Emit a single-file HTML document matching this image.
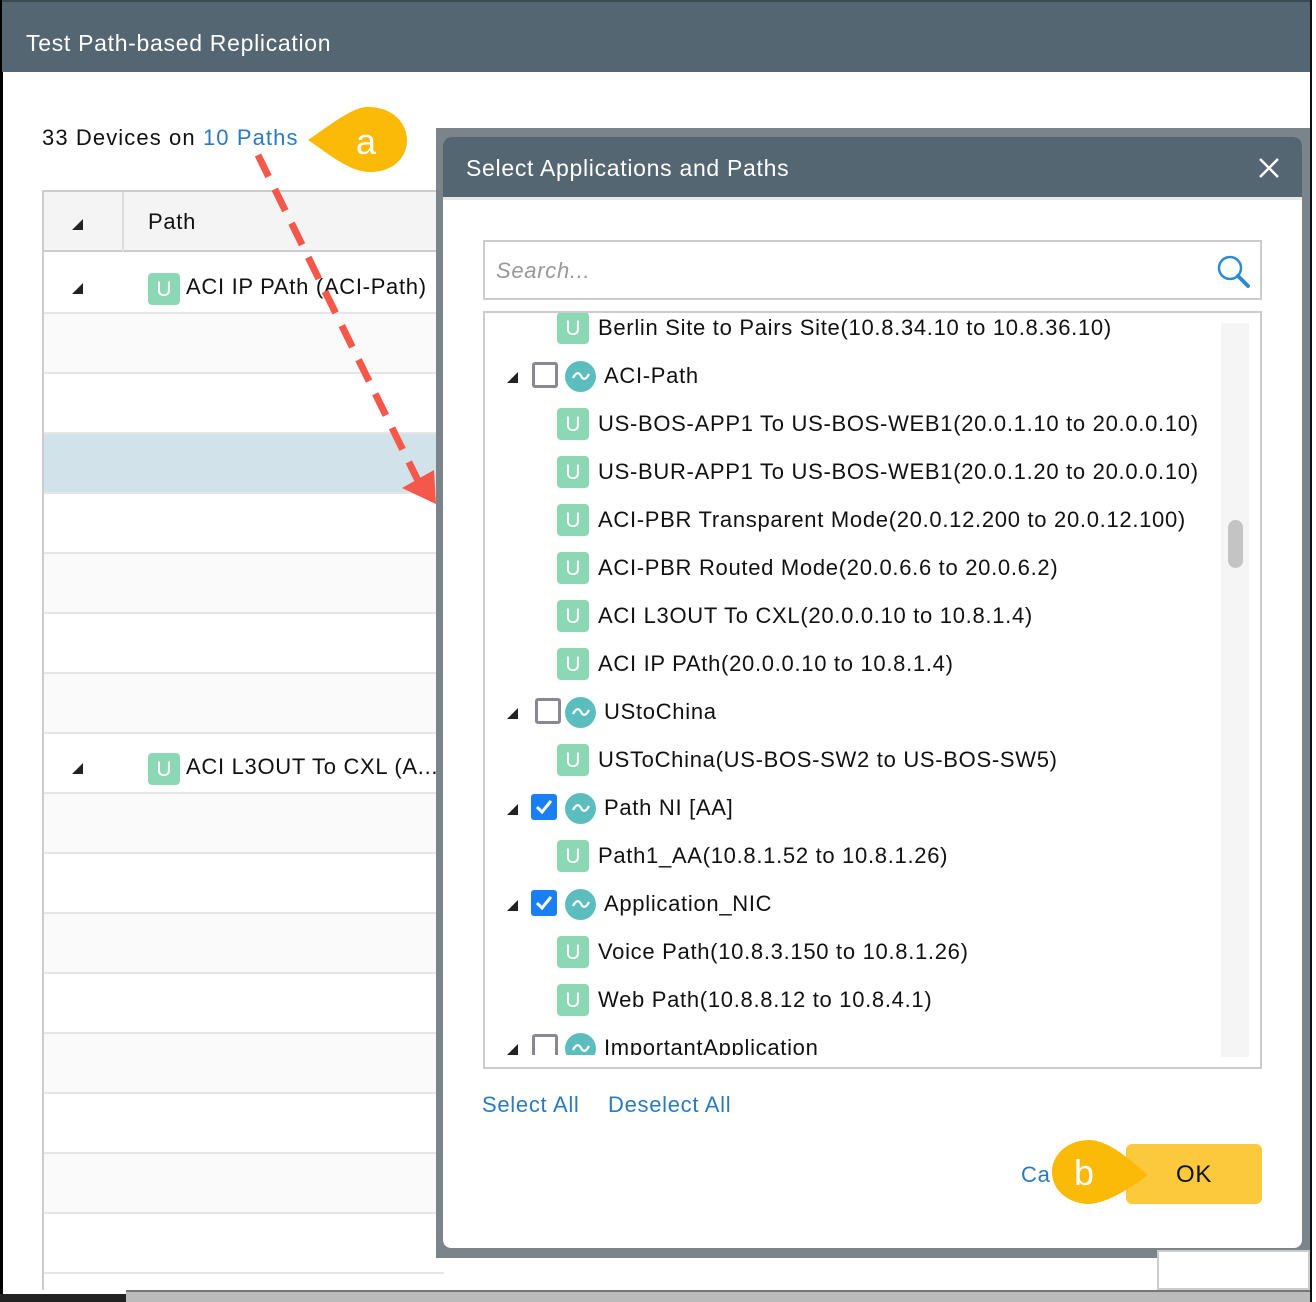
<!DOCTYPE html>
<html><head><meta charset="utf-8"><style>
*{margin:0;padding:0;box-sizing:border-box}
body{width:1316px;height:1302px;position:relative;overflow:hidden;background:#fff;font-family:"Liberation Sans","DejaVu Sans",sans-serif;color:#111}
.a{position:absolute}
.hdr{left:2px;top:0;width:1310px;height:72px;background:#546672;color:#fff;font-size:23px;padding:28px 0 0 24px;border-top:2px solid #3c4a54;letter-spacing:0.7px}
.row{position:absolute;left:44px;width:400px;height:60px;border-bottom:2px solid #e6e6e6}
.tri{position:absolute;width:0;height:0;border-left:11px solid transparent;border-bottom:11px solid #222}
.u{position:absolute;width:32px;height:32px;background:#8dd8b4;border-radius:4px;color:#fff;font-size:21px;text-align:center;line-height:34px}
.t{position:absolute;font-size:22px;white-space:nowrap;line-height:26px;letter-spacing:0.7px}
.cb{position:absolute;width:26px;height:26px;border:3px solid #8a8794;border-radius:3px;background:#fff}
.cb.on{background:#1a7ff0;border-color:#1a7ff0}
.ci{position:absolute;width:31px;height:31px;border-radius:50%;background:#5cbdbf}
</style></head><body>
<div class="a" style="left:0;top:0;width:3px;height:1302px;background:#000"></div>
<div class="a hdr">Test Path-based Replication</div>
<div class="a" style="left:1310px;top:0;width:6px;height:1302px;background:#fff;border-left:2px solid #111"></div>
<div class="t" style="left:42px;top:125px;letter-spacing:1.1px">33 Devices on <span style="color:#2a7ac0">10 Paths</span></div>
<!-- table -->
<div class="a" style="left:42px;top:190px;width:400px;height:1100px;border-left:2px solid #ccc;border-top:2px solid #ccc"></div>
<div class="a" style="left:44px;top:192px;width:400px;height:60px;background:#f4f4f4;border-bottom:2px solid #ccc"></div>
<div class="a" style="left:122px;top:192px;width:2px;height:60px;background:#ddd"></div>
<div class="tri" style="left:72px;top:219px"></div>
<div class="t" style="left:148px;top:209px">Path</div>
<div class="row" style="top:254px"></div>
<div class="row" style="top:314px;background:#fafafa"></div>
<div class="row" style="top:374px"></div>
<div class="row" style="top:434px;background:#d1e2eb"></div>
<div class="row" style="top:494px"></div>
<div class="row" style="top:554px;background:#fafafa"></div>
<div class="row" style="top:614px"></div>
<div class="row" style="top:674px;background:#fafafa"></div>
<div class="row" style="top:734px"></div>
<div class="row" style="top:794px;background:#fafafa"></div>
<div class="row" style="top:854px"></div>
<div class="row" style="top:914px;background:#fafafa"></div>
<div class="row" style="top:974px"></div>
<div class="row" style="top:1034px;background:#fafafa"></div>
<div class="row" style="top:1094px"></div>
<div class="row" style="top:1154px;background:#fafafa"></div>
<div class="row" style="top:1214px"></div>
<div class="tri" style="left:72px;top:283px"></div>
<div class="u" style="left:148px;top:273px">U</div>
<div class="t" style="left:186px;top:274px">ACI IP PAth (ACI-Path)</div>
<div class="tri" style="left:72px;top:763px"></div>
<div class="u" style="left:148px;top:753px">U</div>
<div class="t" style="left:186px;top:754px">ACI L3OUT To CXL (A...</div>
<!-- backdrop shadow -->
<div class="a" style="left:436px;top:128px;width:874px;height:1130px;background:#7c848b"></div>
<div class="a" style="left:1157px;top:1250px;width:153px;height:40px;background:#fff;border:2px solid #ccc"></div>
<div class="a" style="left:126px;top:1290px;width:1184px;height:12px;background:#bbb;border-top:2px solid #777"></div>
<div class="a" style="left:0;top:1294px;width:126px;height:8px;background:#222"></div>
<!-- dialog -->
<div class="a" style="left:443px;top:137px;width:859px;height:1111px;background:#fff;border-radius:8px;overflow:hidden">
 <div class="a" style="left:0;top:0;width:859px;height:60px;background:#546672;color:#fff;font-size:23px;padding:18px 0 0 23px;letter-spacing:0.7px">Select Applications and Paths</div>
 <svg class="a" style="left:815px;top:20px" width="22" height="22"><path d="M2 2L20 20M20 2L2 20" stroke="#fff" stroke-width="2.5"/></svg>
 <div class="a" style="left:0;top:60px;width:859px;height:3px;background:#e8e8e8"></div>
</div>
<div class="a" style="left:483px;top:240px;width:779px;height:60px;border:2px solid #ccc;background:#fff"></div>
<div class="t" style="left:496px;top:258px;color:#999;font-style:italic">Search...</div>
<svg class="a" style="left:1215px;top:253px" width="36" height="36"><circle cx="15" cy="15" r="11" fill="none" stroke="#2d8bd0" stroke-width="2.5"/><path d="M23 23L33 33" stroke="#2d8bd0" stroke-width="4" stroke-linecap="round"/></svg>
<div class="a" style="left:483px;top:311px;width:779px;height:758px;border:2px solid #ccc;background:#fff;overflow:hidden">
 <div class="a" style="left:736px;top:10px;width:28px;height:734px;background:#f5f5f5"></div>
 <div class="a" style="left:743px;top:207px;width:15px;height:48px;background:#c4c4c4;border-radius:8px"></div>
</div>
<div class="a" style="left:485px;top:313px;width:730px;height:742px;overflow:hidden">
 <div class="u" style="left:72px;top:-1px">U</div><div class="t" style="left:113px;top:2px">Berlin Site to Pairs Site(10.8.34.10 to 10.8.36.10)</div>

 <div class="tri" style="left:22px;top:59px"></div><div class="cb" style="left:47px;top:49px"></div><div class="ci" style="left:80px;top:48px"><svg width="31" height="31"><path d="M8 17c3-6 6-6 8-2s5 4 8-2" fill="none" stroke="#fff" stroke-width="2.2"/></svg></div><div class="t" style="left:119px;top:50px">ACI-Path</div>
 <div class="u" style="left:72px;top:95px">U</div><div class="t" style="left:113px;top:98px">US-BOS-APP1 To US-BOS-WEB1(20.0.1.10 to 20.0.0.10)</div>
 <div class="u" style="left:72px;top:143px">U</div><div class="t" style="left:113px;top:146px">US-BUR-APP1 To US-BOS-WEB1(20.0.1.20 to 20.0.0.10)</div>
 <div class="u" style="left:72px;top:191px">U</div><div class="t" style="left:113px;top:194px">ACI-PBR Transparent Mode(20.0.12.200 to 20.0.12.100)</div>
 <div class="u" style="left:72px;top:239px">U</div><div class="t" style="left:113px;top:242px">ACI-PBR Routed Mode(20.0.6.6 to 20.0.6.2)</div>
 <div class="u" style="left:72px;top:287px">U</div><div class="t" style="left:113px;top:290px">ACI L3OUT To CXL(20.0.0.10 to 10.8.1.4)</div>
 <div class="u" style="left:72px;top:335px">U</div><div class="t" style="left:113px;top:338px">ACI IP PAth(20.0.0.10 to 10.8.1.4)</div>

 <div class="tri" style="left:22px;top:395px"></div><div class="cb" style="left:50px;top:385px"></div><div class="ci" style="left:80px;top:384px"><svg width="31" height="31"><path d="M8 17c3-6 6-6 8-2s5 4 8-2" fill="none" stroke="#fff" stroke-width="2.2"/></svg></div><div class="t" style="left:119px;top:386px">UStoChina</div>
 <div class="u" style="left:72px;top:431px">U</div><div class="t" style="left:113px;top:434px">USToChina(US-BOS-SW2 to US-BOS-SW5)</div>

 <div class="tri" style="left:22px;top:491px"></div><div class="cb on" style="left:46px;top:481px"><svg width="22" height="22" style="position:absolute;left:-1px;top:-1px"><path d="M4 11l5 5 9-11" fill="none" stroke="#fff" stroke-width="3"/></svg></div><div class="ci" style="left:80px;top:480px"><svg width="31" height="31"><path d="M8 17c3-6 6-6 8-2s5 4 8-2" fill="none" stroke="#fff" stroke-width="2.2"/></svg></div><div class="t" style="left:119px;top:482px">Path NI [AA]</div>
 <div class="u" style="left:72px;top:527px">U</div><div class="t" style="left:113px;top:530px">Path1_AA(10.8.1.52 to 10.8.1.26)</div>

 <div class="tri" style="left:22px;top:587px"></div><div class="cb on" style="left:46px;top:577px"><svg width="22" height="22" style="position:absolute;left:-1px;top:-1px"><path d="M4 11l5 5 9-11" fill="none" stroke="#fff" stroke-width="3"/></svg></div><div class="ci" style="left:80px;top:576px"><svg width="31" height="31"><path d="M8 17c3-6 6-6 8-2s5 4 8-2" fill="none" stroke="#fff" stroke-width="2.2"/></svg></div><div class="t" style="left:119px;top:578px">Application_NIC</div>
 <div class="u" style="left:72px;top:623px">U</div><div class="t" style="left:113px;top:626px">Voice Path(10.8.3.150 to 10.8.1.26)</div>
 <div class="u" style="left:72px;top:671px">U</div><div class="t" style="left:113px;top:674px">Web Path(10.8.8.12 to 10.8.4.1)</div>

 <div class="tri" style="left:22px;top:731px"></div><div class="cb" style="left:47px;top:721px"></div><div class="ci" style="left:80px;top:720px"><svg width="31" height="31"><path d="M8 17c3-6 6-6 8-2s5 4 8-2" fill="none" stroke="#fff" stroke-width="2.2"/></svg></div><div class="t" style="left:119px;top:722px">ImportantApplication</div>
</div>
<div class="t" style="left:482px;top:1092px;color:#2a7ac0">Select All</div>
<div class="t" style="left:608px;top:1092px;color:#2a7ac0">Deselect All</div>
<div class="t" style="left:1021px;top:1162px;color:#2a7ac0">Ca</div>
<div class="a" style="left:1126px;top:1144px;width:136px;height:60px;background:#fcc93c;border-radius:6px"></div>
<div class="t" style="left:1176px;top:1162px;font-size:24px">OK</div>
<!-- callouts -->
<svg class="a" style="left:0;top:0" width="1316" height="1302">
 <path d="M258 155L425 495" stroke="#f5584a" stroke-width="7" stroke-dasharray="24 14"/>
 <path d="M402 488L436 504L434 470Z" fill="#f5584a"/>
 <path d="M308 140C330 125 355 105 370 107C395 108 407 125 407 140C407 158 393 172 370 172C350 172 330 155 308 140Z" fill="#fbba08"/>
 <path d="M1148 1175C1130 1188 1110 1202 1090 1204C1068 1204 1052 1190 1052 1172C1052 1154 1068 1140 1090 1140C1110 1141 1130 1160 1148 1175Z" fill="#fbba08"/>
</svg>
<div class="t" style="left:356px;top:124px;color:#fff;font-size:36px;line-height:36px">a</div>
<div class="t" style="left:1074px;top:1155px;color:#fff;font-size:36px;line-height:36px">b</div>
</body></html>
